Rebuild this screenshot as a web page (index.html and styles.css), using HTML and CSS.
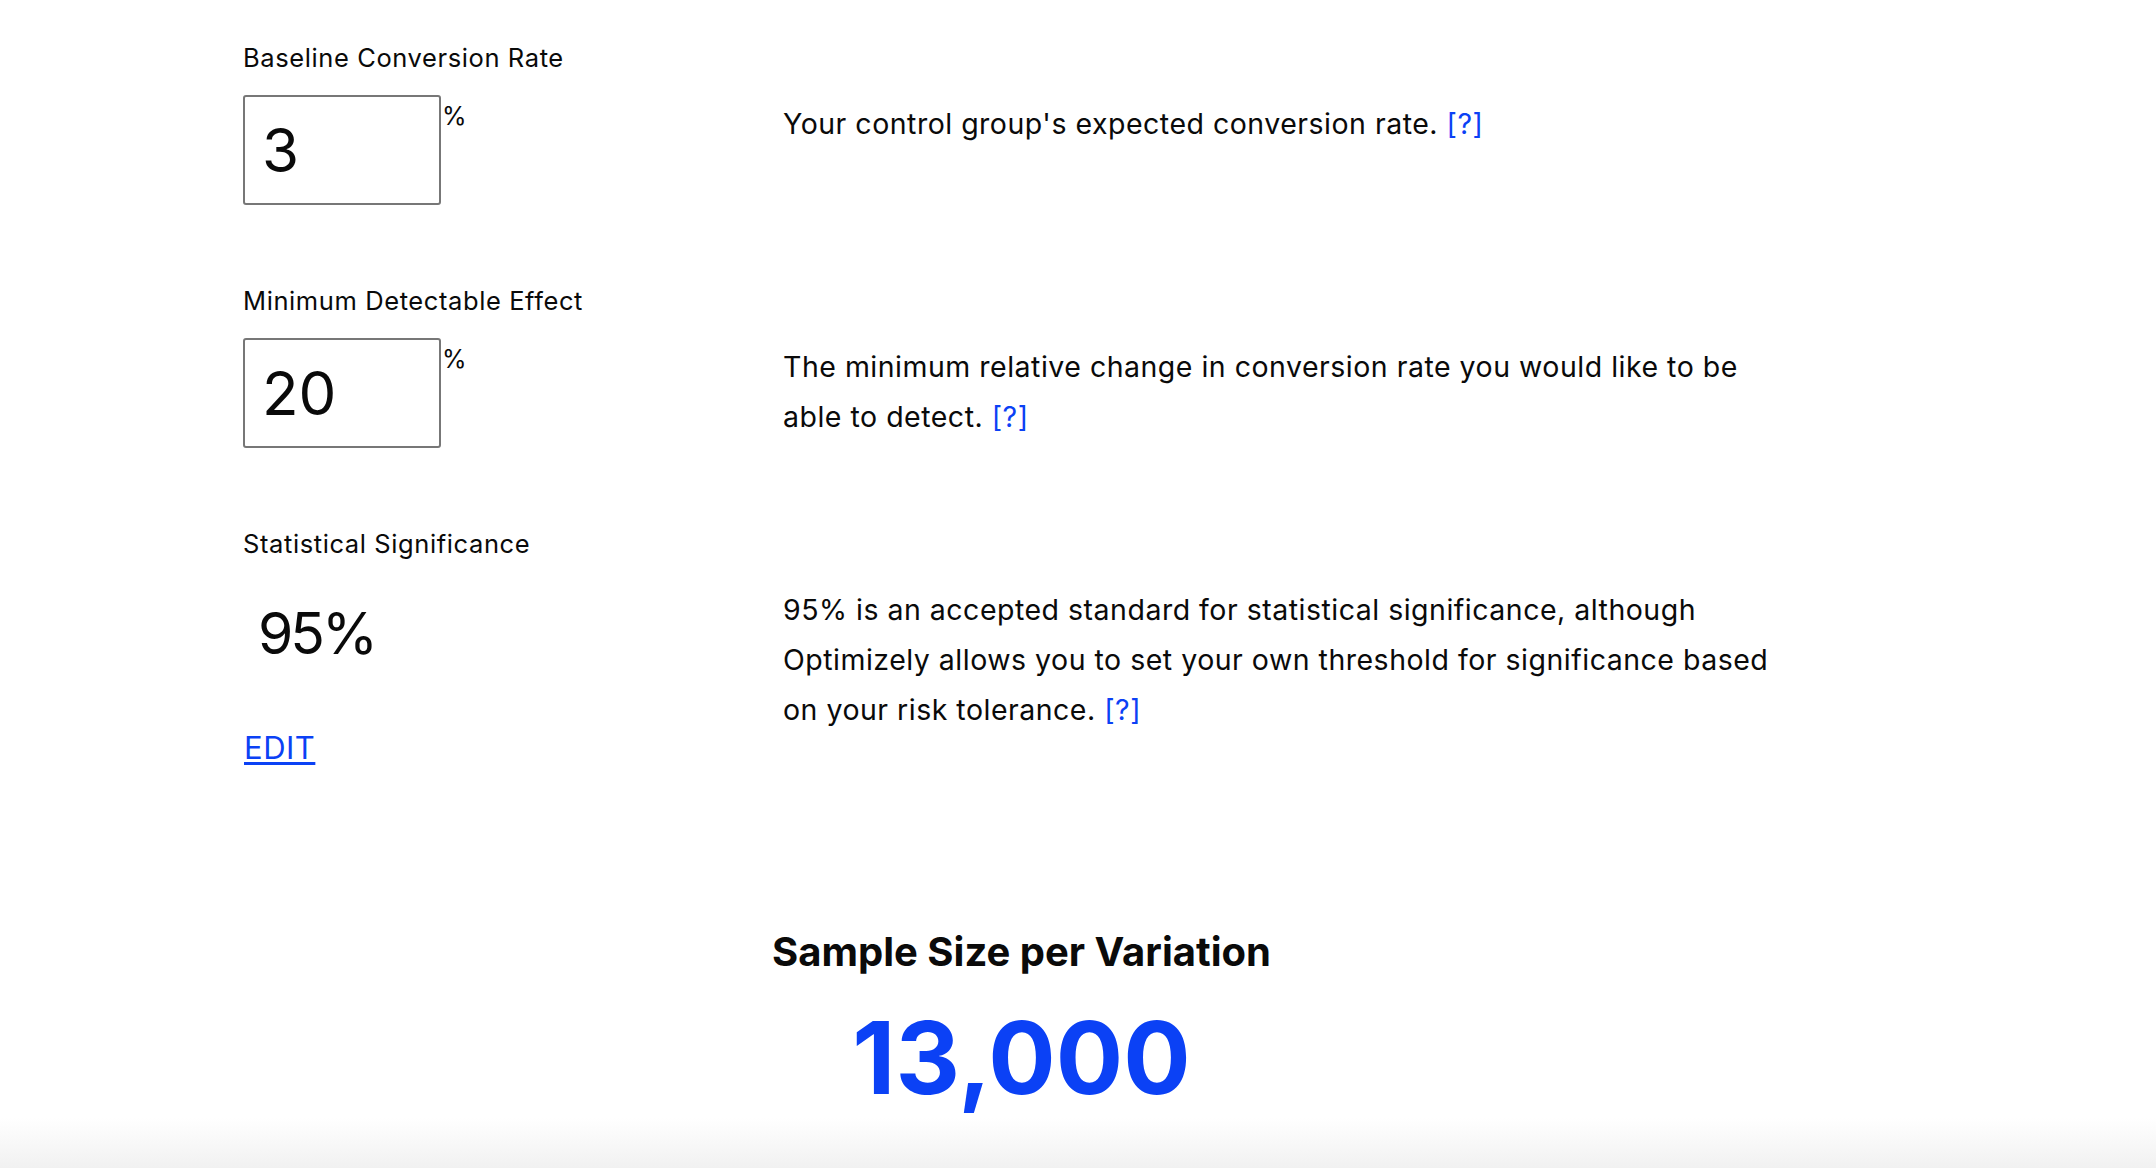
FILE: index.html
```html
<!DOCTYPE html>
<html lang="en">
<head>
  <meta charset="UTF-8">
  <meta name="viewport" content="width=device-width, initial-scale=1.0">
  <title>Sample Size Calculator</title>
  <link rel="stylesheet" href="styles.css">
</head>
<body>
  <div class="calculator">
    <div class="field">
      <label class="field-label" for="baseline">Baseline Conversion Rate</label>
      <div class="input-wrap">
        <input class="field-input" id="baseline" type="text" value="3">
        <span class="unit">%</span>
      </div>
      <p class="field-desc">Your control group's expected conversion rate. <a href="#">[?]</a></p>
    </div>

    <div class="field">
      <label class="field-label" for="mde">Minimum Detectable Effect</label>
      <div class="input-wrap">
        <input class="field-input" id="mde" type="text" value="20">
        <span class="unit">%</span>
      </div>
      <p class="field-desc">The minimum relative change in conversion rate you would like to be able to detect. <a href="#">[?]</a></p>
    </div>

    <div class="field">
      <span class="field-label">Statistical Significance</span>
      <div class="significance">
        <div class="significance-value">95%</div>
        <a class="edit-link" href="#">EDIT</a>
      </div>
      <p class="field-desc">95% is an accepted standard for statistical significance, although Optimizely allows you to set your own threshold for significance based on your risk tolerance. <a href="#">[?]</a></p>
    </div>

    <div class="result">
      <h2 class="result-title">Sample Size per Variation</h2>
      <div class="result-number">13,000</div>
    </div>
  </div>
</body>
</html>
```

FILE: styles.css
```css
html {
  background: linear-gradient(to bottom, #ffffff calc(100vh - 50px), #f1f1f1 100vh) no-repeat;
  background-size: 100% 100vh;
}
body {
  font-family: Inter, "Noto Sans", sans-serif;
  color: #0a0a0a;
  margin: 0;
  padding: 0;
}
a {
  color: #0b41f5;
  text-decoration: none;
}
.calculator {
  width: 1557px;
  margin-left: 243px;
  padding-top: 42px;
}
.field {
  display: grid;
  grid-template-columns: 540px 1010px;
  margin-bottom: 80px;
}
.field-label {
  grid-column: 1;
  grid-row: 1;
  font-size: 25.5px;
  line-height: 32px;
  letter-spacing: 0.6px;
}
.input-wrap {
  grid-column: 1;
  grid-row: 2;
  display: flex;
  align-items: flex-start;
  margin-top: 21px;
}
.field-input {
  box-sizing: border-box;
  width: 198px;
  height: 110px;
  border: 2px solid #777;
  border-radius: 3px;
  padding: 0 0 0 17px;
  font-family: inherit;
  font-size: 60px;
  color: #0a0a0a;
  outline: none;
}
.unit {
  font-size: 25px;
  line-height: 30px;
  margin-left: 1px;
  margin-top: 6px;
}
.field-desc {
  grid-column: 2;
  grid-row: 2;
  margin: 25px 0 0;
  font-size: 28.5px;
  line-height: 50px;
  letter-spacing: 0.5px;
}
.significance {
  grid-column: 1;
  grid-row: 2;
}
.significance-value {
  font-size: 57px;
  line-height: 70px;
  padding-left: 15px;
  margin-top: 39px;
  letter-spacing: -3px;
}
.edit-link {
  display: inline-block;
  font-size: 31px;
  line-height: 36px;
  margin-top: 61px;
  margin-left: 1px;
  letter-spacing: 0.5px;
  text-decoration: underline;
  text-underline-offset: 3px;
}
.result {
  text-align: center;
  padding-top: 81px;
}
.result-title {
  margin: 0;
  font-size: 40px;
  line-height: 50px;
  font-weight: 700;
}
.result-number {
  margin-top: 26px;
  font-size: 100px;
  line-height: 110px;
  font-weight: 700;
  color: #0b41f5;
}
```
